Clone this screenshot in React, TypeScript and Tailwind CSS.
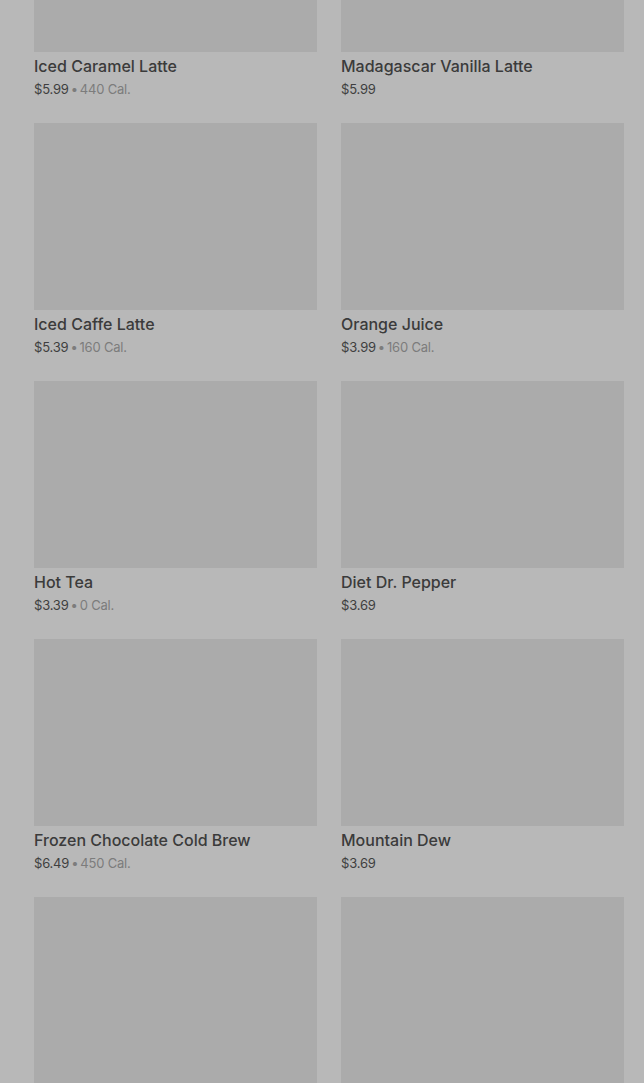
const items = [
  { name: "Iced Caramel Latte", price: "$5.99", cal: "440 Cal." },
  { name: "Madagascar Vanilla Latte", price: "$5.99", cal: "" },
  { name: "Iced Caffe Latte", price: "$5.39", cal: "160 Cal." },
  { name: "Orange Juice", price: "$3.99", cal: "160 Cal." },
  { name: "Hot Tea", price: "$3.39", cal: "0 Cal." },
  { name: "Diet Dr. Pepper", price: "$3.69", cal: "" },
  { name: "Frozen Chocolate Cold Brew", price: "$6.49", cal: "450 Cal." },
  { name: "Mountain Dew", price: "$3.69", cal: "" },
  { name: "", price: "", cal: "" },
  { name: "", price: "", cal: "" },
];

function MenuCard({ name, price, cal }: { name: string; price: string; cal: string }) {
  return (
    <div className="flex flex-col">
      <div className="h-[187px] w-full bg-[#ababab]" />
      <p className="mt-0.5 text-base leading-6 font-medium text-[#3b3b3b]">{name}</p>
      <p className="text-[13px] leading-[22px] tracking-[-0.2px] text-[#3f3f3f]">
        {price}
        {cal && (
          <span className="text-[#7c7c7c]">
            <span className="mx-[2px]">•</span>
            {cal}
          </span>
        )}
      </p>
    </div>
  );
}

export default function App() {
  return (
    <div className="h-[1083px] overflow-hidden bg-[#b8b8b8] font-['Inter',sans-serif]">
      <div className="-mt-[135px] grid grid-cols-2 gap-x-6 gap-y-[23px] pl-[34px] pr-[20px]">
        {items.map((item, i) => (
          <MenuCard key={i} {...item} />
        ))}
      </div>
    </div>
  );
}
